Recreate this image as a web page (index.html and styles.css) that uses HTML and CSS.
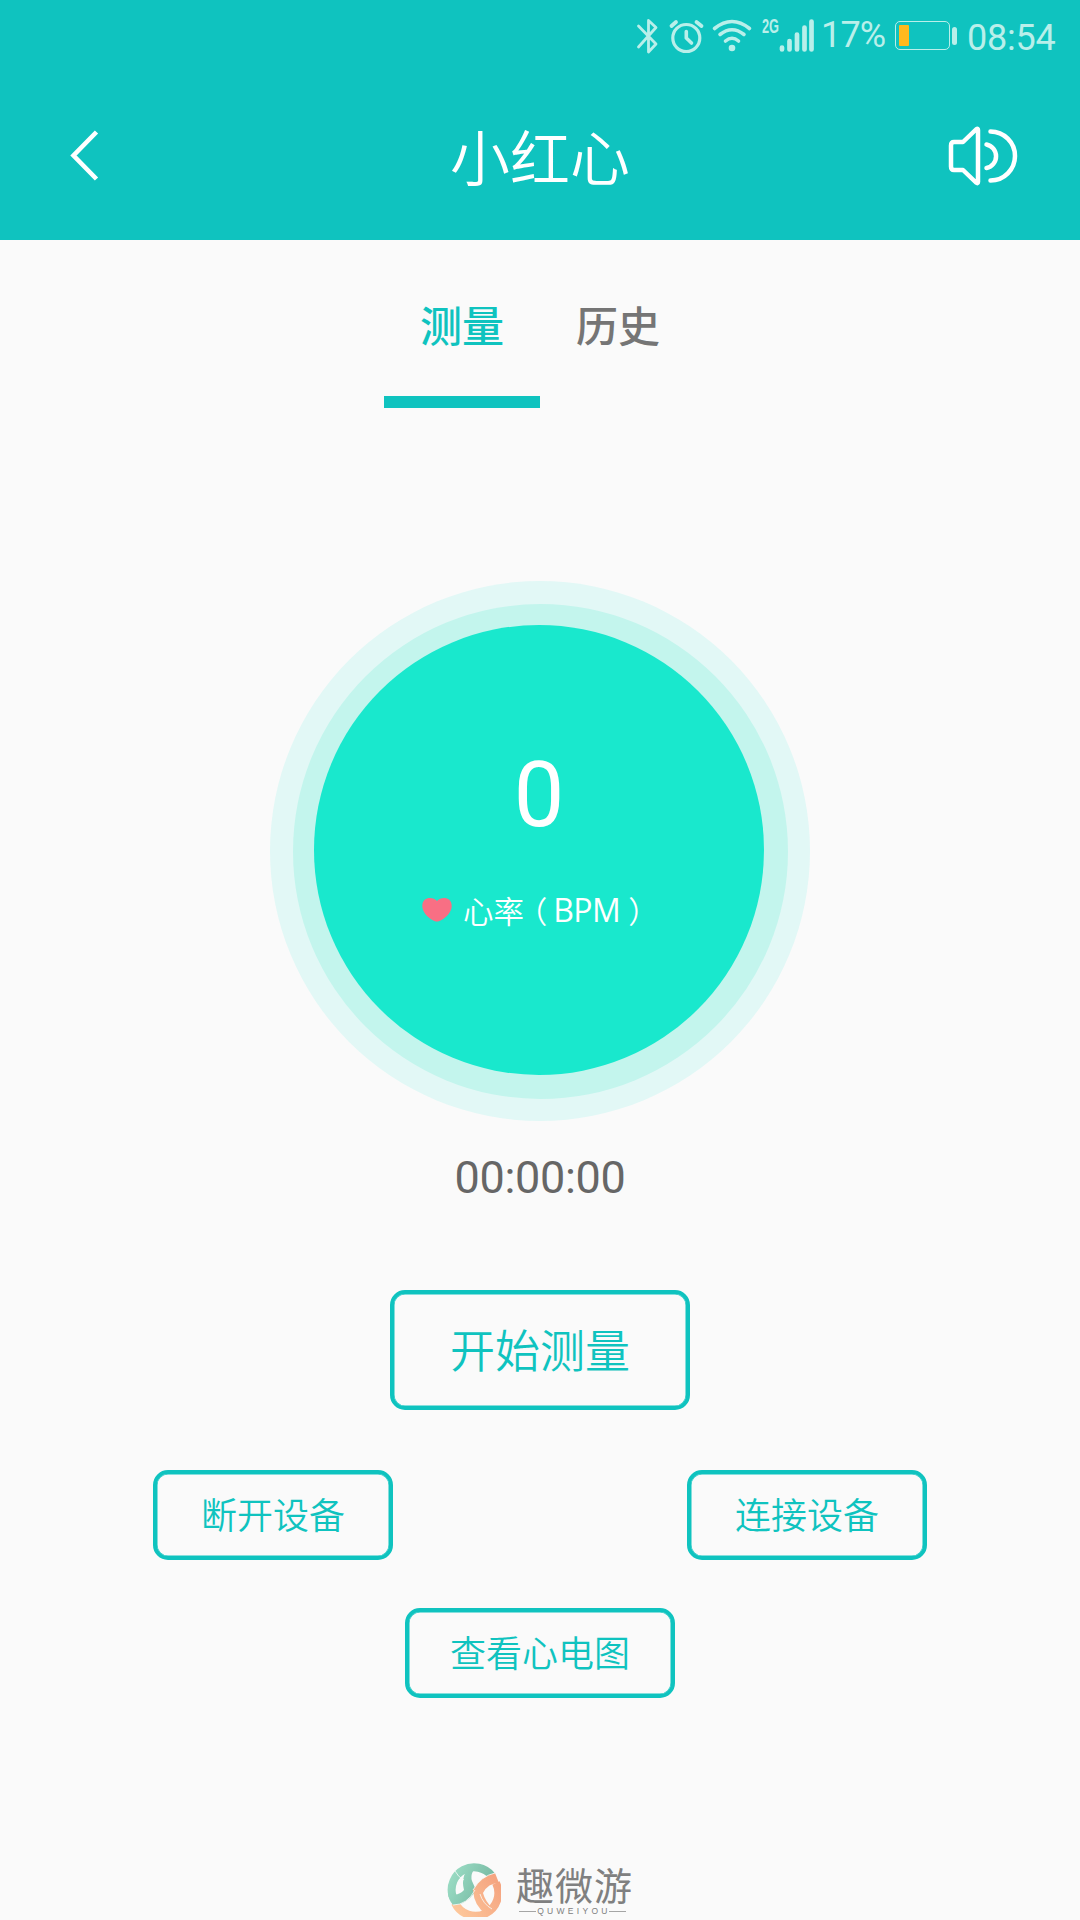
FILE: index.html
```html
<!DOCTYPE html>
<html lang="zh-CN">
<head>
    <meta charset="UTF-8">
    <meta name="viewport" content="width=device-width, initial-scale=1.0">
    <title>小红心</title>
    <link rel="stylesheet" href="styles.css">
</head>
<body>

    <!-- 顶部 -->
    <header>
        <div class="status-bar">
            <svg class="status-icons" width="180" height="60" viewBox="0 0 180 60" fill="none" stroke="#b9efea" stroke-linecap="round" stroke-linejoin="round">
                <!-- 蓝牙 -->
                <path d="M3.5 26 L21 44 L13.5 52 V20.5 L21 27.5 L3.5 47" stroke-width="2.8"/>
                <!-- 闹钟 -->
                <circle cx="51.300" cy="38" r="13.500" stroke-width="3.200"/>
                <path d="M51.300 31.500 V38 L56.500 43" stroke-width="3.600"/>
                <path d="M36.500 26 L41 22 M66.500 26 L61.500 22" stroke-width="3.800"/>
                <!-- WiFi -->
                <path d="M79.500 28.500 Q97 14.500 114.500 28.500 M85 34.500 Q97 25 109 34.500 M90.500 41 Q97 35.500 103.500 41" stroke-width="3.6"/>
                <circle cx="97" cy="48" r="3.300" fill="#b9efea" stroke="none"/>
                <!-- 信号 -->
                <path d="M147 47.500 V49.500 M154.500 41 V49.500 M162 34.500 V49.500 M169.500 27.500 V49.500 M176.500 21.500 V49.500" stroke-width="4.700"/>
            </svg>
            <span class="net-type">2G</span>
            <span class="percent">17%</span>
            <div class="battery"><i></i></div>
            <div class="battery-head"></div>
            <span class="time">08:54</span>
        </div>
        <div class="title-bar">
            <svg class="back" width="32" height="56" viewBox="0 0 32 56" fill="none" stroke="#fff" stroke-width="4.600">
                <path d="M28.500 4 L5.500 27.500 L28.500 51"/>
            </svg>
            <h1>小红心</h1>
            <svg class="sound" width="72" height="62" viewBox="0 0 72 62" fill="none" stroke="#fff" stroke-width="4.500" stroke-linecap="round" stroke-linejoin="round">
                <path d="M7 17 H16 L29.500 4 Q31 3 31 5 V57 Q31 59 29 57.500 L16 45 H7 Q4 45 4 41.500 V20.500 Q4 17 7 17 Z"/>
                <path d="M39.500 19.500 A12 12 0 0 1 39.500 43 M43.500 6.500 A24.500 24.500 0 0 1 43.500 55.500"/>
            </svg>
        </div>
    </header>

    <!-- 选项卡 -->
    <nav>
        <a class="active">测量</a>
        <a>历史</a>
    </nav>

    <!-- 心率 -->
    <section class="measure">
        <div class="ring-outer">
            <div class="ring-inner">
                <div class="circle">
                    <div class="rate">0</div>
                    <div class="label">
                        <svg width="30" height="26" viewBox="0 0 30 26">
                            <path d="M15 4 C11 -0.500 0.300 -0.500 0.300 9 C0.300 17 10.500 24.500 15 24.500 C19.500 24.500 29.700 17 29.700 9 C29.700 -0.500 19 -0.500 15 4 Z" fill="#f86f84"/>
                        </svg>
                        <span>心率</span>
                        <span class="open">（</span>
                        <span class="unit">BPM</span>
                        <span class="close">）</span>
                    </div>
                </div>
            </div>
        </div>
        <div class="timer">00:00:00</div>
    </section>

    <!-- 按钮 -->
    <section class="buttons">
        <button class="start">开始测量</button>
        <div class="row">
            <button>断开设备</button>
            <button>连接设备</button>
        </div>
        <button class="ecg">查看心电图</button>
    </section>

    <!-- 底部标志 -->
    <footer>
        <svg width="54" height="54" viewBox="0 0 54 54" fill="none">
            <defs>
                <linearGradient id="green" gradientUnits="userSpaceOnUse" x1="4" y1="10" x2="44" y2="30">
                    <stop offset="0" stop-color="#9adcc4"/>
                    <stop offset="1" stop-color="#74b6a0"/>
                </linearGradient>
                <linearGradient id="orange" gradientUnits="userSpaceOnUse" x1="10" y1="50" x2="50" y2="20">
                    <stop offset="0" stop-color="#fdc79b"/>
                    <stop offset="1" stop-color="#f5a581"/>
                </linearGradient>
            </defs>
            <path d="M5.500 33 A22.500 22.500 0 0 1 44.500 12.500" stroke="url(#green)" stroke-width="8"/>
            <path d="M49 20 A22.500 22.500 0 0 1 8 40" stroke="url(#orange)" stroke-width="8"/>
            <path d="M34 1 Q22 8 25 18 L29 27 Q20 42 6 42 Q1 36 1 30 Q11 34 17 27 Q13 12 25 1 Z" fill="url(#green)"/>
            <path d="M48 10 Q34 13 26 27 Q27 43 39 51 L46 46 Q38 38 36 30 Q41 20 52 20 Z" fill="url(#orange)"/>
            <path d="M8 8 Q11 14 17 17 M28 27 Q20 42 6 42 M48 10 Q34 13 26 27 M33 31 Q36 41 45 46" stroke="#f7fbf9" stroke-width="0.800"/>
        </svg>
        <div class="brand">
            <div class="brand-name">趣微游</div>
            <div class="brand-en"><span>QUWEIYOU</span></div>
        </div>
    </footer>

</body>
</html>
```
FILE: styles.css
```css
/* 全局 */
* {
    box-sizing: border-box;
}

body {
    margin: 0;
    height: 1920px;
    overflow: hidden;
    background-color: #fafafa;
    font-family: Roboto, "Noto Sans CJK SC", sans-serif;
}

i {
    font-style: normal;
}

svg {
    display: block;
    flex-shrink: 0;
}

/* 顶部 */
header {
    height: 240px;
    background-color: #0fc3bf;
    color: #fff;
}

.status-bar {
    display: flex;
    height: 72px;
    padding-left: 635px;
    color: #b9efea;
    font-size: 36px;
    line-height: 42px;
    white-space: nowrap;
}

.net-type {
    width: 18px;
    margin: 15px 0 0 -53px;
    font-family: "Liberation Sans", sans-serif;
    font-size: 20px;
    font-weight: bold;
    line-height: 22px;
    transform: scaleX(0.64);
    transform-origin: left;
}

.percent {
    width: 66px;
    margin: 14px 0 0 41px;
    letter-spacing: -0.8px;
}

.battery {
    width: 55px;
    height: 29px;
    margin: 21px 0 0 8px;
    padding: 3px;
    border: 1.5px solid #b9efea;
    border-radius: 5px;
}

.battery i {
    display: block;
    width: 10px;
    height: 21px;
    background-color: #ffb91e;
    border-radius: 1px;
}

.battery-head {
    width: 5px;
    height: 18px;
    margin: 27px 0 0 2px;
    background-color: #b9efea;
    border-radius: 3px;
}

.time {
    margin: 17px 0 0 10px;
    letter-spacing: -0.2px;
}

.title-bar {
    display: flex;
    justify-content: space-between;
    align-items: flex-start;
    padding: 38px 61px 0 68px;
}

.back {
    margin: 18px 40px 0 0;
}

.title-bar h1 {
    margin: 6px 0 0 -7px;
    font-size: 60px;
    font-weight: 350;
    line-height: 90px;
}

.sound {
    margin-top: 15px;
}

/* 选项卡 */
nav {
    display: flex;
    justify-content: center;
    height: 168px;
}

nav a {
    width: 156px;
    padding-top: 57px;
    color: #757575;
    font-size: 42px;
    font-weight: 500;
    line-height: 62px;
    text-align: center;
}

nav .active {
    color: #0fc3bf;
    border-bottom: 12px solid #0fc3bf;
}

/* 心率圆盘 */
.measure {
    display: flex;
    flex-direction: column;
    align-items: center;
    padding-top: 173px;
}

.ring-outer,
.ring-inner,
.circle {
    display: flex;
    justify-content: center;
    align-items: center;
    border-radius: 50%;
}

.ring-outer {
    width: 540px;
    height: 540px;
    background-color: #e2f8f6;
}

.ring-inner {
    width: 495px;
    height: 495px;
    padding: 0 2px 2px 0;
    background-color: #c3f5ed;
}

.circle {
    flex-direction: column;
    justify-content: flex-start;
    width: 450px;
    height: 450px;
    background-color: #19e8cd;
    color: #fff;
}

.rate {
    margin-top: 118px;
    font-size: 90px;
    line-height: 106px;
}

.label {
    display: flex;
    align-items: center;
    align-self: flex-start;
    margin: 38px 0 0 108px;
    font-family: "Noto Sans CJK SC", sans-serif;
    font-size: 30.5px;
    font-weight: 350;
    line-height: 46px;
}

.label svg {
    margin-right: 11px;
}

/* 半宽括号 */
.label .open,
.label .close {
    font-feature-settings: "halt";
}

.label .open {
    margin: 0 6px 0 8px;
}

.label .unit {
    font-family: "Open Sans", sans-serif;
    font-size: 32px;
    font-weight: 400;
    letter-spacing: -0.6px;
}

.label .close {
    margin-left: 8px;
}

.timer {
    margin-top: 30px;
    color: #666;
    font-size: 45px;
    line-height: 53px;
    letter-spacing: -0.3px;
}

/* 按钮 */
.buttons {
    display: flex;
    flex-direction: column;
    align-items: center;
    padding-top: 86px;
}

button {
    width: 240px;
    height: 90px;
    padding: 0 0 4px;
    border: 4px solid #0fc3bf;
    border-radius: 15px;
    box-shadow: inset 0 0 0 0.5px #0fc3bf;
    background: none;
    color: #0fc3bf;
    font-family: "Noto Sans CJK SC", sans-serif;
    font-size: 36px;
    font-weight: 350;
}

.start {
    width: 300px;
    height: 120px;
    font-size: 45px;
}

.row {
    display: flex;
    justify-content: space-between;
    width: 774px;
    margin: 60px 0 48px;
}

.ecg {
    width: 270px;
}

/* 底部标志 */
footer {
    display: flex;
    justify-content: center;
    padding-top: 165px;
}

.brand {
    width: 117px;
    margin-left: 15px;
    color: #808080;
}

.brand-name {
    padding-top: 4px;
    font-size: 38px;
    font-weight: 400;
    line-height: 40px;
    letter-spacing: 1px;
    white-space: nowrap;
}

.brand-en {
    display: flex;
    align-items: center;
    gap: 1px;
    width: 107px;
    margin: -1px 0 0 3px;
    font-family: "Liberation Sans", sans-serif;
    font-size: 8.5px;
    line-height: 11px;
    letter-spacing: 3.3px;
}

.brand-en span {
    margin-right: -3px;
}

.brand-en::before,
.brand-en::after {
    content: "";
    flex: 1;
    height: 1px;
    background-color: #a5a5a5;
}
```
